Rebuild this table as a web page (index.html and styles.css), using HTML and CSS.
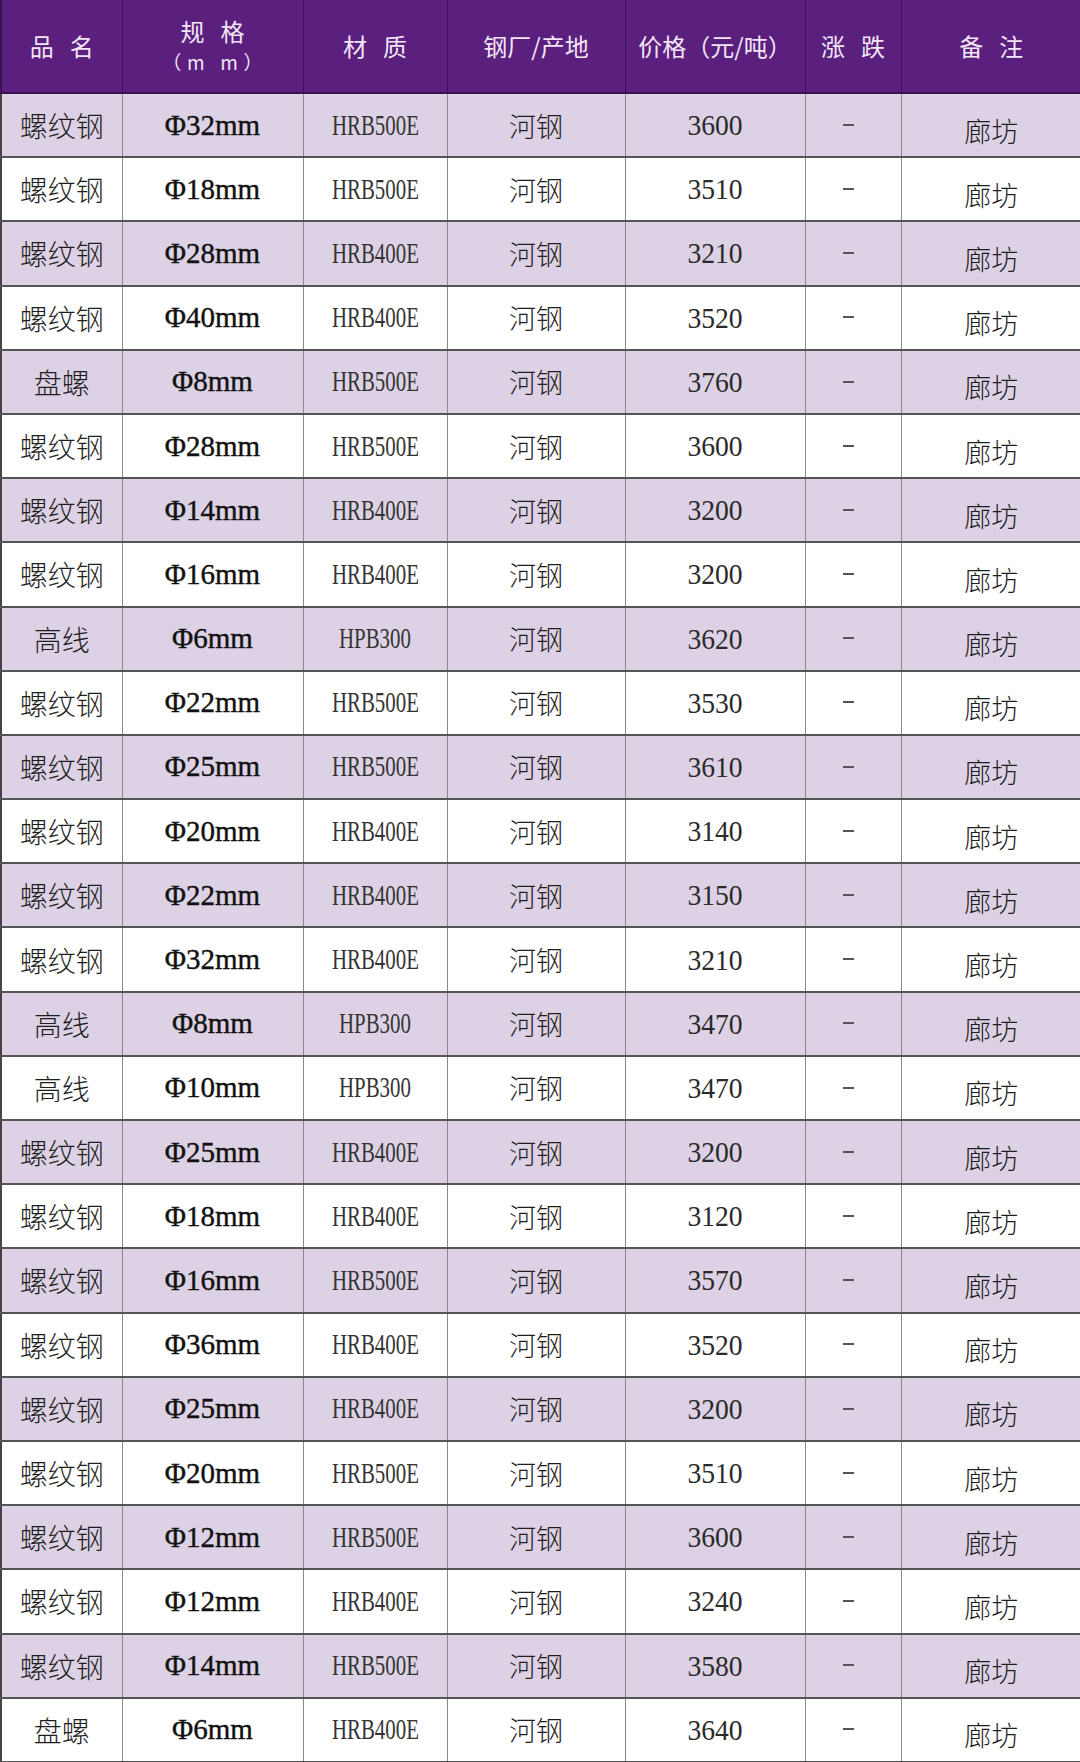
FILE: index.html
```html
<!DOCTYPE html>
<html lang="zh">
<head>
<meta charset="utf-8">
<link rel="stylesheet" href="styles.css">
</head>
<body>
<table class="price-table">
  <colgroup>
    <col class="c1"><col class="c2"><col class="c3"><col class="c4"><col class="c5"><col class="c6"><col class="c7">
  </colgroup>
  <thead>
    <tr class="head-row">
      <th><span class="sp">品 名</span></th>
      <th><span class="sp">规 格</span><br><span class="unit">（m m）</span></th>
      <th><span class="sp">材 质</span></th>
      <th>钢厂/产地</th>
      <th>价格（元/吨）</th>
      <th><span class="sp">涨 跌</span></th>
      <th><span class="sp">备 注</span></th>
    </tr>
  </thead>
  <tbody id="rows"></tbody>
</table>
<script src="app.js"></script>
</body>
</html>
```
FILE: app.js
```js
const data = [
  ["螺纹钢","Φ32mm","HRB500E","3600"],
  ["螺纹钢","Φ18mm","HRB500E","3510"],
  ["螺纹钢","Φ28mm","HRB400E","3210"],
  ["螺纹钢","Φ40mm","HRB400E","3520"],
  ["盘螺","Φ8mm","HRB500E","3760"],
  ["螺纹钢","Φ28mm","HRB500E","3600"],
  ["螺纹钢","Φ14mm","HRB400E","3200"],
  ["螺纹钢","Φ16mm","HRB400E","3200"],
  ["高线","Φ6mm","HPB300","3620"],
  ["螺纹钢","Φ22mm","HRB500E","3530"],
  ["螺纹钢","Φ25mm","HRB500E","3610"],
  ["螺纹钢","Φ20mm","HRB400E","3140"],
  ["螺纹钢","Φ22mm","HRB400E","3150"],
  ["螺纹钢","Φ32mm","HRB400E","3210"],
  ["高线","Φ8mm","HPB300","3470"],
  ["高线","Φ10mm","HPB300","3470"],
  ["螺纹钢","Φ25mm","HRB400E","3200"],
  ["螺纹钢","Φ18mm","HRB400E","3120"],
  ["螺纹钢","Φ16mm","HRB500E","3570"],
  ["螺纹钢","Φ36mm","HRB400E","3520"],
  ["螺纹钢","Φ25mm","HRB400E","3200"],
  ["螺纹钢","Φ20mm","HRB500E","3510"],
  ["螺纹钢","Φ12mm","HRB500E","3600"],
  ["螺纹钢","Φ12mm","HRB400E","3240"],
  ["螺纹钢","Φ14mm","HRB500E","3580"],
  ["盘螺","Φ6mm","HRB400E","3640"]
];
const tbody = document.getElementById("rows");
data.forEach((r, i) => {
  const tr = document.createElement("tr");
  tr.className = i % 2 === 0 ? "shade" : "plain";
  tr.innerHTML =
    `<td class="name">${r[0]}</td>` +
    `<td class="spec">${r[1]}</td>` +
    `<td class="mat"><span class="cond">${r[2]}</span></td>` +
    `<td class="mill">河钢</td>` +
    `<td class="price"><span class="cond2">${r[3]}</span></td>` +
    `<td class="chg"><span class="dash"></span></td>` +
    `<td class="note"><span class="low">廊坊</span></td>`;
  tbody.appendChild(tr);
});
```
FILE: styles.css
```css
html, body {
  margin: 0;
  padding: 0;
  background: #ffffff;
}
body {
  width: 1080px;
  height: 1762px;
  overflow: hidden;
}
.price-table {
  width: 1080px;
  border-collapse: collapse;
  table-layout: fixed;
  font-family: "Noto Sans CJK SC", sans-serif;
}
.c1 { width: 121px; }
.c2 { width: 181px; }
.c3 { width: 144px; }
.c4 { width: 178px; }
.c5 { width: 180px; }
.c6 { width: 96px; }
.c7 { width: 180px; }

.head-row { height: 93px; }
thead th {
  background: #5b1f7e;
  color: #f2e6f6;
  font-weight: 400;
  font-size: 24px;
  padding: 0;
  text-align: center;
  vertical-align: middle;
  border-left: 1px solid #3d1255;
  border-bottom: 2px solid #3a1150;
  line-height: 1.2;
}
thead th:first-child { border-left: 2px solid #3a1150; }
.sp { letter-spacing: 0.22em; margin-right: -0.22em; }
.unit {
  font-size: 19px;
  letter-spacing: 0.3em;
  margin-right: -0.3em;
}

tbody tr { height: 64.2px; }
tbody td {
  padding: 0;
  line-height: 1;
  text-align: center;
  vertical-align: middle;
  border-left: 1px solid #8a8a8a;
  border-bottom: 2px solid #555555;
  color: #2a2a2a;
}
tbody td:first-child { border-left: 2px solid #444; }
tr.shade td { background: #ddd1e5; }
tr.plain td { background: #ffffff; }

.name {
  font-size: 28px;
  font-weight: 300;
  color: #1e1e1e;
}
.spec {
  font-family: "Liberation Serif", serif;
  font-size: 29px;
  color: #111;
  -webkit-text-stroke: 0.4px #111;
}
.mat {
  font-family: "Liberation Serif", serif;
  font-size: 29px;
  color: #333;
}
.cond {
  display: inline-block;
  transform: scaleX(0.72);
}
.mill {
  font-size: 27px;
  font-weight: 300;
  color: #1e1e1e;
}
.price {
  font-family: "Liberation Serif", serif;
  font-size: 30px;
  color: #2a2a2a;
}
.cond2 {
  display: inline-block;
  transform: scaleX(0.92);
}
.dash {
  display: inline-block;
  width: 11px;
  height: 2px;
  background: #555;
  margin-right: 10px;
  vertical-align: middle;
  transform: translateY(-3px);
}
.note {
  font-size: 27px;
  font-weight: 300;
  color: #1e1e1e;
}
.low {
  display: inline-block;
  transform: translateY(5px);
}
```
